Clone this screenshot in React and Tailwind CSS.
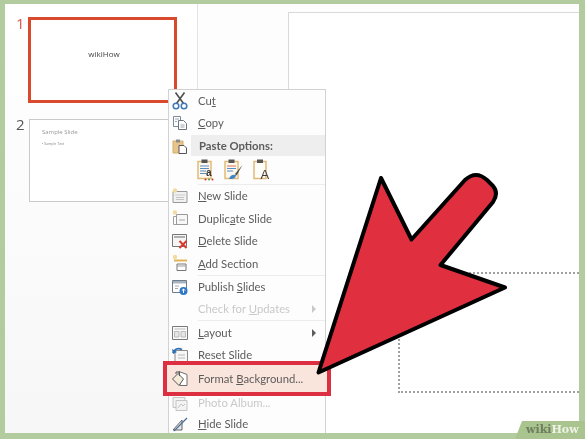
import React from "react";

const Box = ({ children }) => (
  <svg viewBox="0 0 18 18" className="w-[18px] h-[18px] shrink-0">
    {children}
  </svg>
);

const CutIcon = () => (
  <Box>
    <path d="M4.500 0.500l8 11M13.500 0.500l-8 11" stroke="#4f4f4f" strokeWidth="1.600" fill="none" />
    <circle cx="5" cy="14" r="2.800" stroke="#3f78b5" strokeWidth="1.500" fill="none" />
    <circle cx="13" cy="14" r="2.800" stroke="#3f78b5" strokeWidth="1.500" fill="none" />
  </Box>
);

const CopyIcon = () => (
  <Box>
    <path d="M2.500 2.500h7v10h-7z" fill="#fff" stroke="#7d8a98" />
    <path d="M7.500 6.500h5l3 3v6h-8z" fill="#fff" stroke="#6c7480" />
    <path d="M4 5h4M4 7.500h2M9.500 11h4M9.500 13h4" stroke="#9aa3ad" />
  </Box>
);

const PasteIcon = () => (
  <Box>
    <path d="M2 4h10v12H2z" fill="#e6c48a" stroke="#d6ae6a" />
    <path d="M5 2.500h4v3H5z" fill="#8a8a8a" />
    <path d="M8 8.500h5l2.500 2.500v5.500H8z" fill="#fff" stroke="#555" />
  </Box>
);

const SlideIcon = () => (
  <Box>
    <path d="M2 4.500h14v11H2z" fill="#f1f1f1" stroke="#9a9a9a" />
    <path d="M4 7h10v2H4z" fill="#ddd" />
    <path d="M5 10.500h8M5 12.500h8" stroke="#c4c4c4" />
    <circle cx="4" cy="3.500" r="2.200" fill="#f3dc9f" />
  </Box>
);

const DuplicateIcon = () => (
  <Box>
    <circle cx="4" cy="3.500" r="2.200" fill="#f3dc9f" />
    <path d="M2.500 7.500h10v8h-10z" fill="#fff" stroke="#a0a0a0" />
    <path d="M5.500 5.500h11v10h-11z" fill="#f7f7f7" stroke="#9a9a9a" />
    <path d="M8 11h6" stroke="#aaa" />
  </Box>
);

const DeleteIcon = () => (
  <Box>
    <path d="M1.500 2.500h14v12h-14z" fill="#f5f5f5" stroke="#777" />
    <path d="M3 5h11" stroke="#999" strokeWidth="1.500" />
    <path d="M8.500 9l7 7M15.500 9l-7 7" stroke="#d8392b" strokeWidth="2" />
  </Box>
);

const SectionIcon = () => (
  <Box>
    <circle cx="4" cy="3" r="2.200" fill="#f3dc9f" />
    <path d="M3 6.500h13" stroke="#e2b458" strokeWidth="2" />
    <path d="M6 10h9v6.500H6z" fill="#fff" stroke="#777" />
    <path d="M6 12h9" stroke="#999" />
  </Box>
);

const PublishIcon = () => (
  <Box>
    <path d="M1.500 2.500h14v12h-14z" fill="#fff" stroke="#6e7c8a" />
    <path d="M2 3h13v2.500H2z" fill="#a6b4c2" />
    <path d="M4 8h4M4 10.500h3" stroke="#aaa" />
    <circle cx="12.500" cy="13" r="4" fill="#2d78c8" />
    <path d="M12.500 15v-4M10.800 12.700l1.700-1.700 1.700 1.700" stroke="#fff" fill="none" />
  </Box>
);

const LayoutIcon = () => (
  <Box>
    <path d="M1.500 2.500h15v13h-15z" fill="#fafafa" stroke="#7a7a7a" />
    <path d="M3.500 5h11" stroke="#bbb" />
    <path d="M3.500 7.500h4.500v5.500H3.500zM10 7.500h4.500v5.500H10z" fill="#e6e6e6" stroke="#bbb" />
  </Box>
);

const ResetIcon = () => (
  <Box>
    <path d="M4 4.500h12.500v11H4z" fill="#f7f7f7" stroke="#8a8a8a" />
    <path d="M2 7c1-4 5-5.500 9-3.500" fill="none" stroke="#2d6fb5" strokeWidth="1.800" />
    <path d="M1 3l1 5 4-2z" fill="#2d6fb5" />
    <path d="M7 9h7M7 12h7" stroke="#bbb" />
  </Box>
);

const FormatIcon = () => (
  <Box>
    <path d="M8 1.500l8 3v11h-7z" fill="#fff" stroke="#6e6e6e" />
    <path d="M1.500 9L7 3.500l5.500 5.500L8 15.500z" fill="#f4ead9" stroke="#555" />
    <path d="M5 4V2h3.500v4" fill="none" stroke="#555" />
  </Box>
);

const AlbumIcon = () => (
  <Box>
    <path d="M2 3.500h12v10H2z" fill="#f3f3f3" stroke="#c4c4c4" />
    <path d="M5 6.500h11v10H5z" fill="#f3f3f3" stroke="#c4c4c4" />
    <path d="M7 14l3-4 2 2 2-2" fill="none" stroke="#c4c4c4" />
  </Box>
);

const HideIcon = () => (
  <Box>
    <path d="M2 15L11 5v10z" fill="#e8e8e8" stroke="#666" />
    <path d="M3 16L16 3" stroke="#4a6f9a" strokeWidth="1.300" />
  </Box>
);

const ClipA = () => (
  <svg viewBox="0 0 18 23" className="w-[18px] h-[23px]">
    <path d="M1 3.500h13v17H1z" fill="#fdf8ee" stroke="#e1bb78" strokeWidth="1.500" />
    <path d="M4.500 1.500h6v3.500h-6z" fill="#555" />
    <path d="M3 8h9M3 10.500h9M3 13h6M3 15.500h6" stroke="#5b8cc4" />
    <text x="9" y="18" fontSize="10" fontWeight="700" fill="#333" fontFamily="Liberation Sans, sans-serif">a</text>
    <circle cx="8.500" cy="21.500" r="1" fill="#c9352b" />
    <circle cx="12" cy="21.500" r="1" fill="#4a9a4a" />
    <circle cx="15.500" cy="21.500" r="1" fill="#c9352b" />
  </svg>
);

const ClipBrush = () => (
  <svg viewBox="0 0 20 23" className="w-[20px] h-[23px]">
    <path d="M1 3.500h13v17H1z" fill="#fdf8ee" stroke="#e1bb78" strokeWidth="1.500" />
    <path d="M4.500 1.500h6v3.500h-6z" fill="#555" />
    <path d="M3 8h9" stroke="#d9705a" />
    <path d="M3 10.500h9M3 13h6" stroke="#5b8cc4" />
    <path d="M18.500 7L11 16l1.500 1.500z" fill="#4a4a4a" />
    <path d="M5 21c1-4 4-5 7-4 0 3-3 4.500-7 4z" fill="#3f84c8" />
  </svg>
);

const ClipText = () => (
  <svg viewBox="0 0 20 23" className="w-[20px] h-[23px]">
    <path d="M1 3.500h12v17H1z" fill="#fffdf8" stroke="#e1bb78" strokeWidth="1.500" />
    <path d="M4 1.500h6v3.500H4z" fill="#555" />
    <text x="7.500" y="20.500" fontSize="13" fill="#3c3c3c" fontFamily="Liberation Sans, sans-serif">A</text>
  </svg>
);

const Row = ({ icon, children, disabled, arrow, h = "h-[22px]" }) => (
  <div className={"flex items-center pl-[2px] " + h + " " + (disabled ? "text-[#c9c9c9]" : "text-[#5c5c5c]")}>
    {icon}
    <span className="ml-[9px] flex-1">{children}</span>
    {arrow && (
      <span
        className={
          "mr-[9px] w-0 h-0 border-y-[4px] border-y-transparent border-l-[4px] " +
          (disabled ? "border-l-[#c9c9c9]" : "border-l-[#5c5c5c]")
        }
      ></span>
    )}
  </div>
);

const Sep = () => <div className="h-px ml-[29px] bg-[#ececec]"></div>;

const ContextMenu = () => (
  <div className="absolute left-[163px] top-[85px] w-[158px] border border-[#d2d2d2] bg-[#fdfdfd] text-[11.300px] leading-none font-['Lato',sans-serif]">
    <Row icon={<CutIcon />}>
      Cu<u>t</u>
    </Row>
    <Row icon={<CopyIcon />}>
      <u>C</u>opy
    </Row>
    <div className="flex items-center h-[21px] mt-px pl-[2px]">
      <PasteIcon />
      <div className="flex items-center flex-1 h-full ml-[2px] pl-[8px] bg-[#eeeeee] font-bold text-[#5c5c5c]">
        Paste Options:
      </div>
    </div>
    <div className="flex items-center gap-[9px] h-[27.500px] pl-[28px]">
      <ClipA />
      <ClipBrush />
      <ClipText />
    </div>
    <Sep />
    <Row icon={<SlideIcon />} h="h-[22.500px]">
      <u>N</u>ew Slide
    </Row>
    <Row icon={<DuplicateIcon />} h="h-[22.500px]">
      Duplic<u>a</u>te Slide
    </Row>
    <Row icon={<DeleteIcon />} h="h-[22.500px]">
      <u>D</u>elete Slide
    </Row>
    <Row icon={<SectionIcon />} h="h-[22.500px]">
      <u>A</u>dd Section
    </Row>
    <Sep />
    <div className="h-[0.500px]"></div>
    <Row icon={<PublishIcon />}>
      Publish <u>S</u>lides
    </Row>
    <Row icon={<Box />} disabled arrow>
      Check for <u>U</u>pdates
    </Row>
    <Sep />
    <div className="h-px"></div>
    <Row icon={<LayoutIcon />} arrow>
      <u>L</u>ayout
    </Row>
    <Row icon={<ResetIcon />} h="h-[21px]">
      Reset Slide
    </Row>
    <div className="relative flex items-center h-[27px] -mx-[2px] pl-[4px] bg-[#fae5dd] outline-[4px] outline-solid outline-[#dc2f42] text-[#5c5c5c]">
      <FormatIcon />
      <span className="ml-[9px]">
        Format <u>B</u>ackground...
      </span>
    </div>
    <Row icon={<AlbumIcon />} disabled h="h-[21px]">
      Photo Album...
    </Row>
    <Row icon={<HideIcon />}>
      <u>H</u>ide Slide
    </Row>
  </div>
);

const Thumbnails = () => (
  <div className="w-[193px] shrink-0 h-full border-r border-[#e4e4e4] bg-linear-to-b from-white to-[#f7f7f7] pt-[13px] font-['Open_Sans',sans-serif]">
    <div className="flex">
      <div className="w-[23px] pl-[11px] text-[15px] leading-[16px] mt-[-2px] text-[#d8554a]">1</div>
      <div className="flex items-center justify-center w-[149px] h-[86px] pb-[12px] pl-[3px] bg-white border-[3px] border-[#d84a2b] text-[8px] text-[#444]">
        wikiHow
      </div>
    </div>
    <div className="flex mt-[16px]">
      <div className="w-[24px] pl-[11px] text-[15px] leading-[16px] mt-[-3px] text-[#555]">2</div>
      <div className="w-[147px] h-[83px] bg-white border border-[#c9c9c9] pl-[12px] pt-[8px]">
        <div className="text-[6px] leading-[8px] text-[#999]">Sample Slide</div>
        <div className="text-[3.500px] leading-[5px] mt-[5px] text-[#888]">• Sample Text</div>
      </div>
    </div>
  </div>
);

const Arrow = () => (
  <svg viewBox="0 0 585 439" className="absolute left-0 top-0 w-[585px] h-[439px] pointer-events-none">
    <path
      d="M318.500 372.500L381 178L411.500 239.500L465 180Q476 170 487 180L493 186Q499 193 493 202L440.500 265L505 287.500Z"
      fill="#e0303f"
      stroke="#000"
      strokeWidth="4"
      strokeLinejoin="round"
    />
  </svg>
);

const Watermark = () => (
  <div className="absolute right-0 bottom-0 w-[70px] h-[18px] pl-[11px] pt-[2px] bg-[#a9c48f] [clip-path:polygon(7px_0,100%_0,100%_100%,0_100%)] text-[11px] leading-[14px] font-bold font-['DejaVu_Serif',serif] whitespace-nowrap">
    <span className="text-[#6d7d5e]">wiki</span>
    <span className="text-[#eef3e6]">How</span>
  </div>
);

export default function App() {
  return (
    <div className="relative w-[585px] h-[439px] overflow-hidden bg-[#b3cc9f] pt-[4px] pl-[5px] pr-[6px] pb-[6px] blur-[0.400px]">
      <div className="relative flex h-full bg-[#fdfdfd] overflow-hidden">
        <Thumbnails />
        <div className="flex-1 pl-[90px] pt-[8px] min-w-0">
          <div className="h-[500px] bg-white border-l border-t border-[#d9d9d9] pl-[109px] pt-[259px]">
            <div className="h-[121px] border-2 border-r-0 border-dotted border-[#a0a0a0]"></div>
          </div>
        </div>
        <ContextMenu />
      </div>
      <Arrow />
      <Watermark />
    </div>
  );
}
